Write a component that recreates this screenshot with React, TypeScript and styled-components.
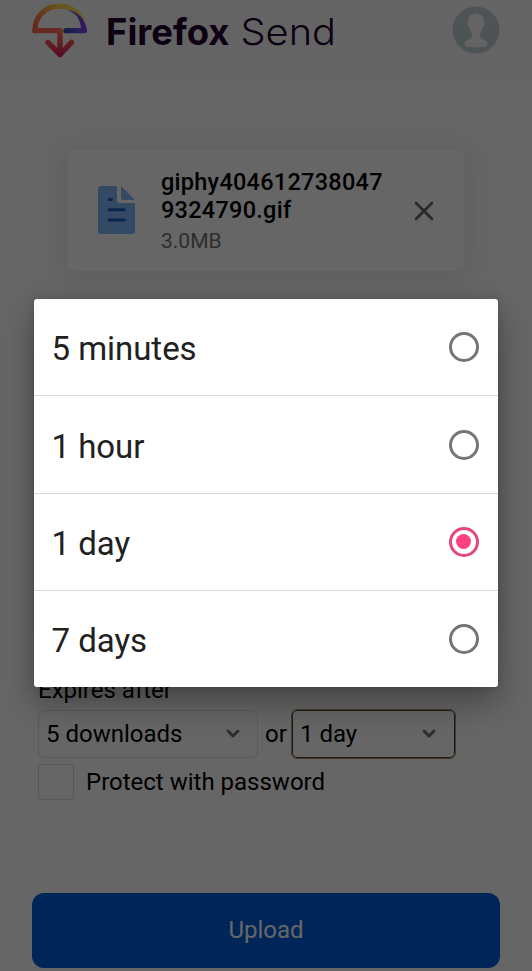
import React, { useState } from "react";
import styled, { createGlobalStyle } from "styled-components";

const GlobalStyle = createGlobalStyle`
  *, *::before, *::after { box-sizing: border-box; }
  html, body { margin: 0; height: 100%; overflow: hidden; }
  body { font-family: Roboto, "Liberation Sans", sans-serif; background: #fff; color: #000; }
  button { font: inherit; border: 0; background: none; padding: 0; }
`;

const Page = styled.div`
  position: relative;
  height: 971px;
  display: flex;
  flex-direction: column;
  overflow: hidden;
`;

const Header = styled.header`
  height: 78px;
  flex: none;
  display: flex;
  align-items: flex-start;
  justify-content: space-between;
  padding: 3px 32px 0;
  background: #fbfbfb;
`;

const Brand = styled.div`
  display: flex;
  align-items: flex-start;
`;

const Wordmark = styled.svg`
  display: block;
  width: 240px;
  height: 56px;
  margin-left: 14px;
  font-family: Inter, sans-serif;
  font-size: 37px;
  fill: #220030;
`;

const Avatar = styled.svg`
  display: block;
  width: 48px;
  height: 48px;
  margin-top: 3px;
`;

const Main = styled.main`
  flex: 1;
  display: flex;
  flex-direction: column;
  padding: 37px 32px 3px;
`;

const Panel = styled.section`
  height: 520px;
  flex: none;
  padding: 35px 36px;
  border-radius: 8px;
  background: #fcfcfc;
`;

const FileCard = styled.article`
  height: 121px;
  display: flex;
  align-items: flex-start;
  padding: 18px 30px 0;
  border-radius: 6px;
  background: #fff;
  box-shadow: 0 4px 24px rgba(32, 18, 90, 0.1);
`;

const FileInfo = styled.div`
  width: 224px;
  margin-left: 26px;
`;

const FileName = styled.div`
  font-size: 23.5px;
  line-height: 28px;
  font-weight: 500;
  letter-spacing: 0.26px;
  word-break: break-all;
`;

const FileSize = styled.div`
  margin-top: 5px;
  font-size: 21px;
  line-height: 24px;
  color: #737373;
`;

const FileIcon = styled.svg`
  width: 37px;
  height: 48px;
  margin-top: 18px;
`;

const Remove = styled.button`
  margin: 33px 0 0 28.5px;
  height: 20px;
  svg { display: block; }
`;

const Options = styled.section`
  display: flex;
  flex-direction: column;
  padding: 42px 6px 0;
  font-size: 24px;
`;

const OptionsTitle = styled.div`
  height: 33px;
  line-height: 27px;
`;

const SelectRow = styled.div`
  display: flex;
  align-items: center;
  height: 48px;
`;

const SelectBox = styled.div<{ $width: number; $focused?: boolean }>`
  width: ${(p) => p.$width}px;
  height: 48px;
  display: flex;
  align-items: center;
  justify-content: space-between;
  padding: 0 ${(p) => (p.$focused ? 17 : 16)}px 0 7px;
  border: 1px solid ${(p) => (p.$focused ? "#4a4238" : "#e0e0ea")};
  border-radius: ${(p) => (p.$focused ? 5 : 6)}px;
  outline: ${(p) => (p.$focused ? "1px solid #b3946a" : "none")};
`;

const Joiner = styled.span`
  width: 34px;
  padding-left: 7px;
`;

const CheckRow = styled.label`
  display: flex;
  align-items: center;
  height: 36px;
  margin-top: 6px;
`;

const CheckBox = styled.span`
  width: 36px;
  height: 36px;
  margin-right: 12px;
  border: 1px solid #dcdce6;
  border-radius: 3px;
`;

const Upload = styled.button`
  height: 75.5px;
  flex: none;
  margin-top: auto;
  border-radius: 12px;
  background: #0060df;
  color: #fff;
  font-size: 24px;
`;

const Scrim = styled.div`
  position: absolute;
  inset: 0;
  display: flex;
  flex-direction: column;
  align-items: center;
  padding: 298.6px 0.5px 0 0;
  background: rgba(0, 0, 0, 0.6);
`;

const Dialog = styled.div`
  width: 464.5px;
  height: 388.8px;
  flex: none;
  display: grid;
  grid-template-rows: 96.8px repeat(3, 1fr);
  border-radius: 3px;
  background: #fff;
  box-shadow: 0 16px 32px rgba(0, 0, 0, 0.32), 0 0 8px rgba(0, 0, 0, 0.12);
`;

const Choice = styled.button`
  display: flex;
  align-items: center;
  justify-content: space-between;
  padding: 3px 19.5px 0 18px;
  font-size: 33px;
  letter-spacing: -0.04px;
  color: #212121;
  & + & { border-top: 1px solid #d9d9d9; }
`;

const Radio = styled.span<{ $on: boolean }>`
  width: 30px;
  height: 30px;
  margin-top: -3px;
  display: grid;
  place-items: center;
  border: 3px solid ${(p) => (p.$on ? "#e8457f" : "#757575")};
  border-radius: 50%;
  &::after {
    content: "";
    width: 15px;
    height: 15px;
    border-radius: 50%;
    background: ${(p) => (p.$on ? "#ff4081" : "transparent")};
  }
`;

const Logo = () => (
  <svg width="56" height="56" viewBox="0 0 56 56" fill="none" strokeLinecap="round" strokeLinejoin="round">
    <defs>
      <linearGradient id="dome" x1="2" y1="29" x2="45" y2="3" gradientUnits="userSpaceOnUse">
        <stop offset="0" stopColor="#ff5a50" />
        <stop offset="0.35" stopColor="#ff9640" />
        <stop offset="0.7" stopColor="#ffd84a" />
        <stop offset="1" stopColor="#ffe85a" />
      </linearGradient>
      <linearGradient id="arrow" x1="28" y1="28" x2="28" y2="54" gradientUnits="userSpaceOnUse">
        <stop offset="0" stopColor="#ff7a4c" />
        <stop offset="0.5" stopColor="#f5485a" />
        <stop offset="1" stopColor="#d9185c" />
      </linearGradient>
      <linearGradient id="base" x1="31" y1="28" x2="53" y2="28" gradientUnits="userSpaceOnUse">
        <stop offset="0" stopColor="#2b4ba8" />
        <stop offset="1" stopColor="#7857ff" />
      </linearGradient>
    </defs>
    <path d="M2.9 27.7C2.9 13 14 3.2 27.5 3.2C38 3.2 47 9 50 18" stroke="url(#dome)" strokeWidth="5.2" />
    <path d="M2.9 27.7H28" stroke="#ff6a52" strokeWidth="5.2" />
    <path d="M28 28V51M16 39.3 28 51.5 39.5 39.3" stroke="url(#arrow)" strokeWidth="5.4" />
    <path d="M34 27.7H52.3" stroke="url(#base)" strokeWidth="5.2" />
    <path d="M35 6.8C42.8 7.8 49.5 12.5 52 18.5C54 22 55 25 54.8 28L50 29C48.5 24 48.6 16 43.5 11.5C41 9.3 38 7.8 35 6.8Z" fill="#7c43e5" />
  </svg>
);

const Chevron = () => (
  <svg width="16" height="12" viewBox="0 0 16 12" fill="none">
    <path d="m3 3 5 5 5-5" stroke="#737373" strokeWidth="3" strokeLinecap="round" strokeLinejoin="round" />
  </svg>
);

const durations = ["5 minutes", "1 hour", "1 day", "7 days"];

export default function App() {
  const [duration, setDuration] = useState("1 day");
  return (
    <>
      <GlobalStyle />
      <Page>
        <Header>
          <Brand>
            <Logo />
            <Wordmark viewBox="0 0 240 56">
              <text x="4" y="42" fontWeight="700" textLength="123.5" lengthAdjust="spacingAndGlyphs">Firefox</text>
              <text x="138.5" y="42" fontWeight="300" textLength="95.5" lengthAdjust="spacingAndGlyphs">Send</text>
            </Wordmark>
          </Brand>
          <Avatar viewBox="0 0 48 48">
            <circle cx="24" cy="24" r="23.5" fill="#c4d0d5" />
            <path
              d="M24 7.5C18.8 7.5 16 11 16 16.2C14.9 16.7 15.3 20 17 20.8C17.7 24 19 26 19.8 27.3V31C19.2 34 12.5 33.8 12.5 38C12.5 41.5 18 41.2 24 41.2S35.5 41.5 35.5 38C35.5 33.8 28.8 34 28.2 31V27.3C29.3 25.8 30.3 23.8 31 20.8C32.7 20 33.1 16.7 32 16.2C32 11 29.2 7.5 24 7.5Z"
              fill="#f9fafb"
            />
          </Avatar>
        </Header>
        <Main>
          <Panel>
            <FileCard>
              <FileIcon viewBox="0 0 37 48">
                <path d="M3 0H19V14Q19 17 22 17H37V45Q37 48 34 48H3Q0 48 0 45V3Q0 0 3 0Z" fill="#80b7fa" />
                <path d="M23 0 37 14H25Q23 14 23 12Z" fill="#80b7fa" />
                <path d="M11 13.5H13.5M11 23.7H26.3M11 34H26.3" stroke="#1764ca" strokeWidth="3" strokeLinecap="round" />
              </FileIcon>
              <FileInfo>
                <FileName>giphy4046127380479324790.gif</FileName>
                <FileSize>3.0MB</FileSize>
              </FileInfo>
              <Remove aria-label="Remove file">
                <svg width="20" height="20" viewBox="0 0 20 20">
                  <path d="m2 2 16 16M18 2 2 18" stroke="#66666a" strokeWidth="2.6" strokeLinecap="round" />
                </svg>
              </Remove>
            </FileCard>
          </Panel>
          <Options>
            <OptionsTitle>Expires after</OptionsTitle>
            <SelectRow>
              <SelectBox $width={220}>5 downloads<Chevron /></SelectBox>
              <Joiner>or</Joiner>
              <SelectBox $width={163} $focused>1 day<Chevron /></SelectBox>
            </SelectRow>
            <CheckRow><CheckBox />Protect with password</CheckRow>
          </Options>
          <Upload>Upload</Upload>
        </Main>
        <Scrim>
          <Dialog role="dialog">
            {durations.map((d) => (
              <Choice key={d} onClick={() => setDuration(d)}>
                {d}
                <Radio $on={d === duration} />
              </Choice>
            ))}
          </Dialog>
        </Scrim>
      </Page>
    </>
  );
}
